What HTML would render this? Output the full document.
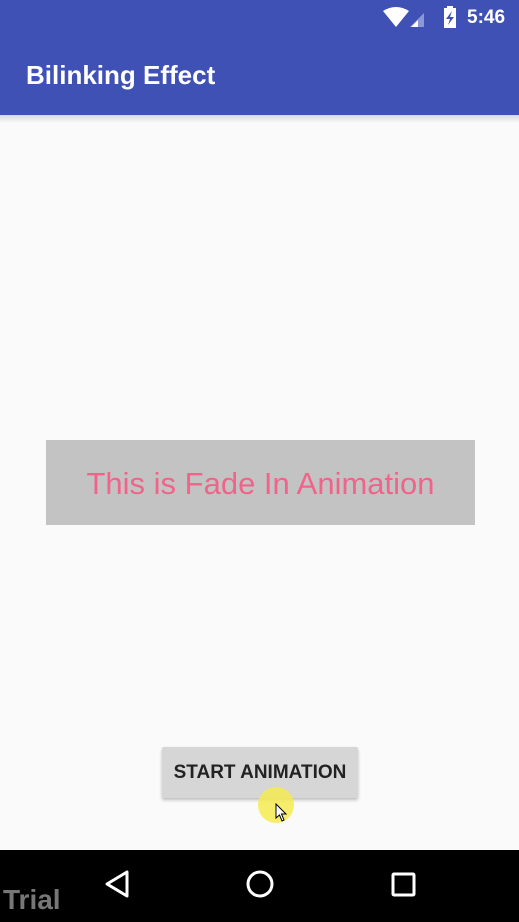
<!DOCTYPE html>
<html><head><meta charset="utf-8"><style>
html,body{margin:0;padding:0;width:519px;height:922px;overflow:hidden;background:#000;font-family:"Liberation Sans",sans-serif}
.bar{position:absolute;left:0;top:0;width:519px;height:115px;background:#3F51B5}
.content{position:absolute;left:0;top:115px;width:519px;height:735px;background:#fafafa}
.shadow{position:absolute;left:0;top:115px;width:519px;height:8px;background:linear-gradient(#d8d8dc,#fafafa)}
.title{position:absolute;left:26px;top:60px;color:#fff;font-size:26px;font-weight:bold}
.time{position:absolute;left:467px;top:7px;color:#fff;font-size:19px;font-weight:bold}
.box{position:absolute;left:46px;top:440px;width:429px;height:85px;background:#c4c3c4;color:#f0648a;font-size:31px;text-align:center;line-height:88px}
.btn{position:absolute;left:162px;top:747px;width:196px;height:51px;background:#d6d6d6;border-radius:2px;box-shadow:0 2px 3px rgba(0,0,0,.25);color:#222;font-size:19px;font-weight:bold;text-align:center;line-height:52px;white-space:nowrap}
.dot{position:absolute;left:258px;top:787px;width:36px;height:36px;border-radius:50%;background:rgba(245,235,80,.85)}
.trial{position:absolute;left:3px;top:884px;color:#777;font-size:28px;font-weight:bold}
</style></head><body>
<div class="bar"></div>
<div class="content"></div>
<div class="shadow"></div>
<div class="title">Bilinking Effect</div>
<svg style="position:absolute;left:380px;top:5px" width="90" height="24">
<path d="M3 6 Q16 -2 29 6 L16 22 Z" fill="#fff"/>
<path d="M44 8 L44 22 L30 22 Z" fill="#8c97d6"/><path d="M38 15 L38 22 L31 22 Z" fill="#fff"/>
<rect x="64" y="3" width="12" height="20" fill="#fff"/><rect x="67" y="1" width="6" height="3" fill="#fff"/>
<path d="M72 6 L66 14 L70 14 L68 20 L74 12 L70 12 Z" fill="#3F51B5"/>
</svg>
<div class="time">5:46</div>
<div class="box">This is Fade In Animation</div>
<div class="btn">START ANIMATION</div>
<div class="dot"></div>
<svg style="position:absolute;left:275px;top:803px" width="14" height="20"><path d="M1 1 L1 15 L4.5 12 L7 18 L9 17 L6.5 11 L11 11 Z" fill="#fff" stroke="#000" stroke-width="1"/></svg>
<svg style="position:absolute;left:0;top:850px" width="519" height="72">
<path d="M127 22 L127 46 L107 34 Z" fill="none" stroke="#fff" stroke-width="3" stroke-linejoin="round"/>
<circle cx="260" cy="34" r="12" fill="none" stroke="#fff" stroke-width="3"/>
<rect x="393" y="24" width="21" height="21" rx="1" fill="none" stroke="#fff" stroke-width="3"/>
</svg>
<div class="trial">Trial</div>
</body></html>
